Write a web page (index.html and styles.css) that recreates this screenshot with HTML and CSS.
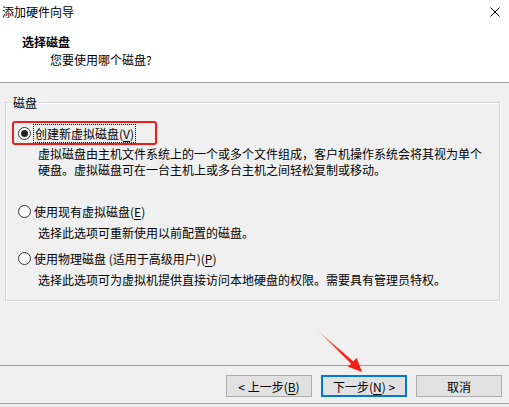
FILE: index.html
```html
<!DOCTYPE html>
<html>
<head>
    <meta charset="UTF-8">
    <title>添加硬件向导</title>
    <link rel="stylesheet" href="styles.css">
</head>
<body>
    <div class="header">
        <div class="titlebar">
            <div class="title">添加硬件向导</div>
            <svg class="close" width="10" height="10" viewBox="0 0 10 10">
                <path d="M0.5 0.5 L9.5 9.5 M9.5 0.5 L0.5 9.5" stroke="#000" stroke-width="1" fill="none"/>
            </svg>
        </div>
        <div class="head-title">选择磁盘</div>
        <div class="head-sub">您要使用哪个磁盘?</div>
    </div>

    <div class="group">
        <div class="group-label">磁盘</div>

        <!-- highlighted option -->
        <div class="option-mark">
            <span class="radio checked"></span>
            <span class="focus-text">创建新虚拟磁盘(<u>V</u>)</span>
        </div>
        <div class="desc first">
            <div>虚拟磁盘由主机文件系统上的一个或多个文件组成，客户机操作系统会将其视为单个</div>
            <div>硬盘。虚拟磁盘可在一台主机上或多台主机之间轻松复制或移动。</div>
        </div>

        <div class="option opt2">
            <span class="radio"></span>
            <span class="opt-text">使用现有虚拟磁盘(<u>E</u>)</span>
        </div>
        <div class="desc">选择此选项可重新使用以前配置的磁盘。</div>

        <div class="option opt3">
            <span class="radio"></span>
            <span class="opt-text">使用物理磁盘 (适用于高级用户)(<u>P</u>)</span>
        </div>
        <div class="desc">选择此选项可为虚拟机提供直接访问本地硬盘的权限。需要具有管理员特权。</div>
    </div>

    <div class="footer">
        <button class="btn">&lt; 上一步(<u>B</u>)</button>
        <button class="btn default">下一步(<u>N</u>) &gt;</button>
        <button class="btn">取消</button>
    </div>

    <!-- annotation arrow -->
    <svg class="arrow" width="509" height="407" viewBox="0 0 509 407">
        <defs>
            <linearGradient id="arrowGrad" x1="317" y1="330" x2="362" y2="372" gradientUnits="userSpaceOnUse">
                <stop offset="0" stop-color="#ff6a5c" stop-opacity="0.6"/>
                <stop offset="0.5" stop-color="#f8281c"/>
                <stop offset="1" stop-color="#f01a10"/>
            </linearGradient>
        </defs>
        <polygon points="317,330 353.5,361.6 356.5,357.8 362,372 347.6,366.6 351.2,363.8" fill="url(#arrowGrad)"/>
    </svg>
</body>
</html>
```

FILE: styles.css
```css
        body {
            background-color: #F0F0F0;
            font-family: "Noto Sans CJK SC", "Microsoft YaHei", sans-serif;
            font-size: 12px;
            color: #000;
            margin: 0;
            padding: 0;
            width: 509px;
            height: 407px;
            overflow: hidden;
            position: relative;
        }
        .header {
            background-color: #fff;
            height: 82px;
            border-bottom: 1px solid #a0a0a0;
        }
        .titlebar {
            display: flex;
            justify-content: space-between;
            align-items: center;
            height: 24px;
            padding: 0 9px 0 2px;
        }
        .title {
            line-height: 16px;
        }
        .head-title {
            font-weight: bold;
            line-height: 18px;
            margin: 9px 0 0 22px;
        }
        .head-sub {
            line-height: 18px;
            margin-left: 50px;
        }
        .group {
            height: 199px;
            box-sizing: border-box;
            margin: 19px 9px 0 5px;
            border: 1px solid #d5d5d5;
            box-shadow: inset 1px 1px 0 #fff, 1px 1px 0 #fff;
        }
        .group-label {
            display: inline-block;
            line-height: 16px;
            margin: -8px 0 0 6px;
            padding: 0 1px;
            background-color: #F0F0F0;
            vertical-align: top;
        }
        .option-mark {
            display: flex;
            align-items: center;
            width: 145px;
            height: 24px;
            box-sizing: border-box;
            margin: 1px 0 0 6px;
            padding-left: 4px;
            border: 2px solid #f01c1c;
            border-radius: 3px;
            gap: 2px;
        }
        .focus-text {
            line-height: 17px;
            padding: 0 1px;
            border: 1px dotted #000;
        }
        .option {
            display: flex;
            align-items: center;
            height: 20px;
            margin-left: 12px;
            gap: 3px;
        }
        .opt2 {
            margin-top: 23px;
        }
        .opt3 {
            margin-top: 8px;
        }
        .radio {
            width: 13px;
            height: 13px;
            box-sizing: border-box;
            border: 1px solid #333;
            border-radius: 50%;
            background-color: #fff;
            display: flex;
            align-items: center;
            justify-content: center;
            flex: none;
        }
        .radio.checked::after {
            content: "";
            width: 7px;
            height: 7px;
            border-radius: 50%;
            background-color: #222;
        }
        .desc {
            line-height: 15px;
            margin: 4px 0 0 32px;
            white-space: nowrap;
        }
        .desc.first {
            line-height: 16px;
            margin-top: 1px;
        }
        u {
            text-decoration-thickness: 1px;
            text-underline-offset: 2px;
        }
        .footer {
            margin-top: 64px;
            border-top: 1px solid #a0a0a0;
            border-bottom: 1px solid #a0a0a0;
            height: 39px;
            box-sizing: border-box;
            display: flex;
            justify-content: flex-end;
            align-items: flex-start;
            gap: 9px;
            padding: 9px 7px 0 0;
        }
        .btn {
            width: 86px;
            height: 22px;
            background-color: #e1e1e1;
            border: 1px solid #adadad;
            font-family: "Noto Sans CJK SC", "Microsoft YaHei", sans-serif;
            font-size: 12px;
            color: #000;
            padding: 0;
            margin: 0;
        }
        .btn.default {
            border: 2px solid #0078d7;
        }
        .arrow {
            position: absolute;
            left: 0;
            top: 0;
            pointer-events: none;
        }
```
